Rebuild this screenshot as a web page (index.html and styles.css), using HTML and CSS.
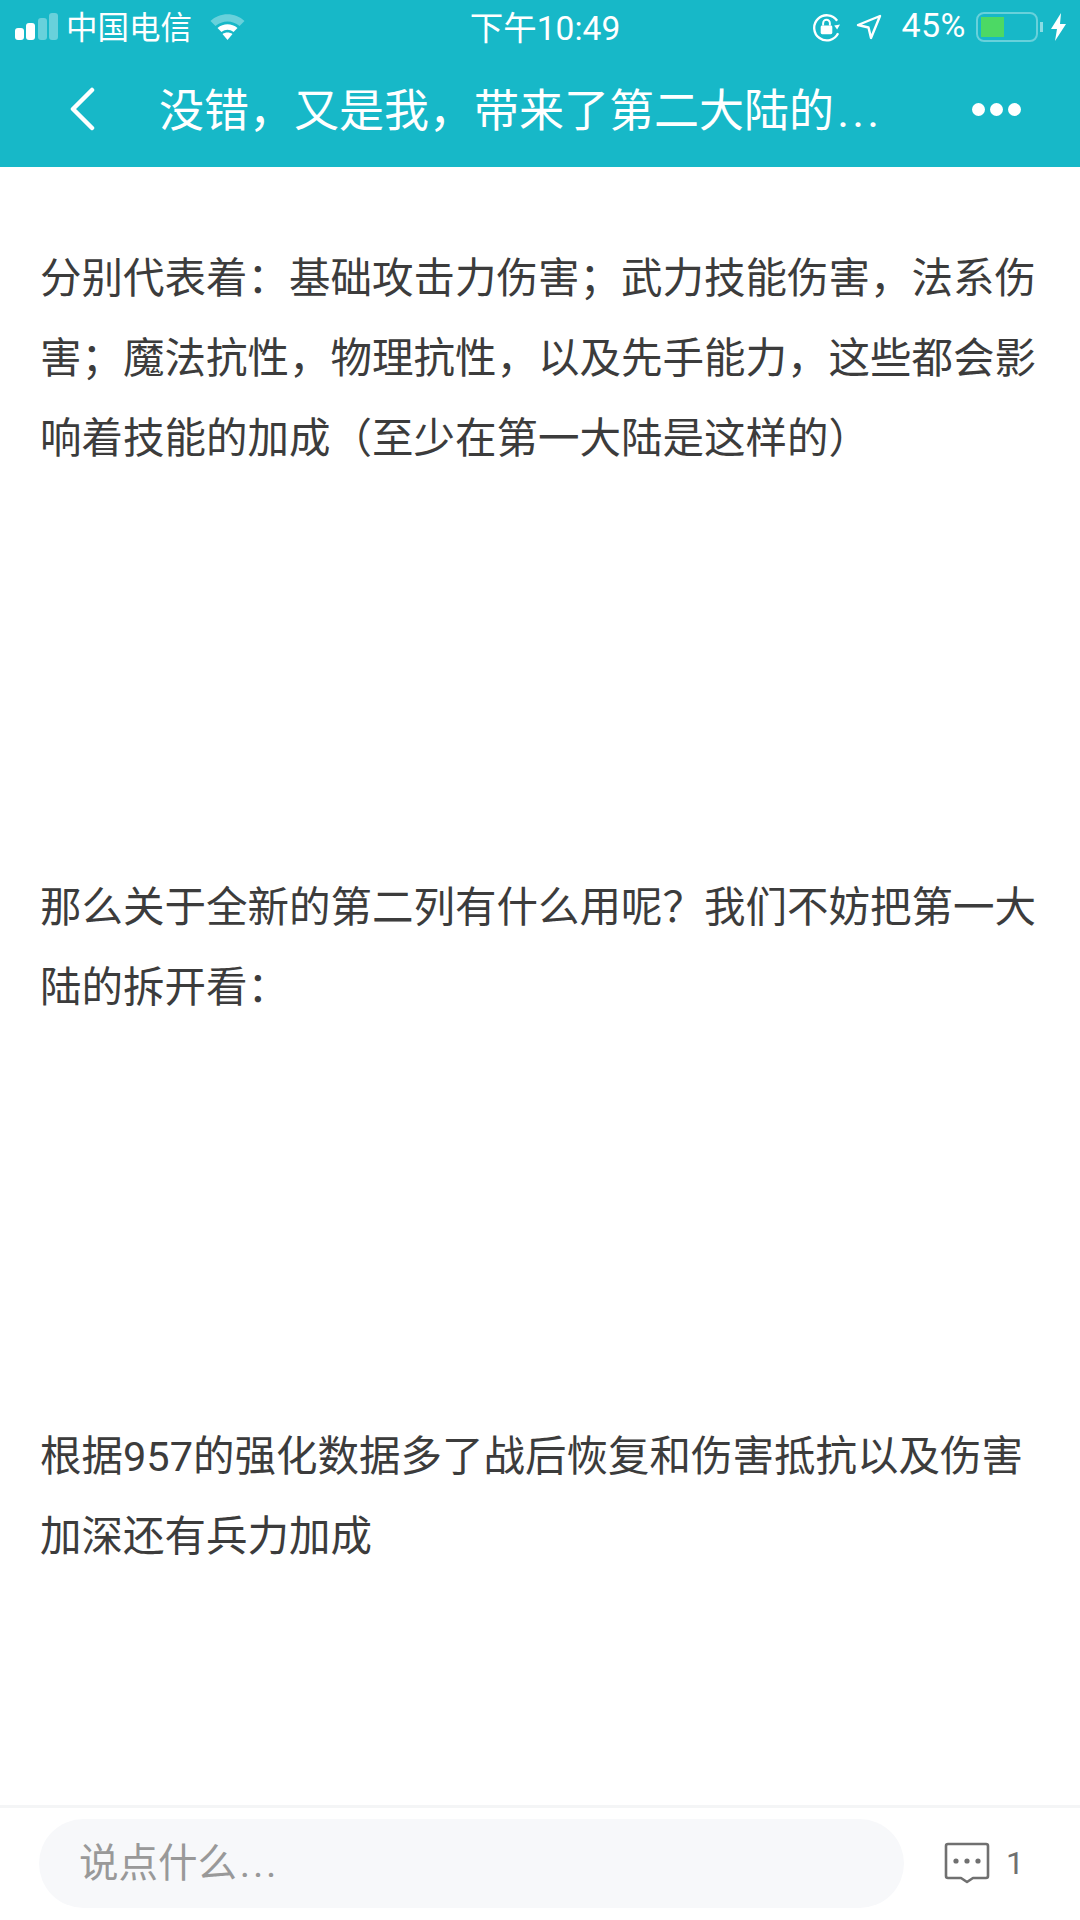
FILE: index.html
```html
<!DOCTYPE html>
<html lang="zh-CN">
<head>
  <meta charset="UTF-8">
  <title>没错&#xFF0C;又是我&#xFF0C;带来了第二大陆的...</title>
  <link rel="stylesheet" href="styles.css">
</head>
<body>
  <header class="top">
    <div class="status">
      <div class="status-left">
        <svg class="signal" width="44" height="28" viewBox="0 0 44 28">
          <rect x="0" y="15" width="9" height="12" rx="3" fill="#fff"/>
          <rect x="11" y="10" width="9" height="17" rx="3" fill="#fff"/>
          <rect x="23" y="5" width="9" height="22" rx="3" fill="#fff" opacity=".35"/>
          <rect x="34" y="0" width="9" height="27" rx="3" fill="#fff" opacity=".35"/>
        </svg>
        <span class="carrier">中国电信</span>
        <svg class="wifi" width="37" height="28" viewBox="0 0 36 28">
          <path d="M1 8C10-1 26-1 35 8L30 13C23 7 13 7 6 13Z" fill="#fff" opacity=".35"/>
          <path d="M8 15C14 10 22 10 28 15L24 19C20 16 16 16 12 19Z" fill="#fff"/>
          <path d="M13 21C16 19 20 19 23 21L18 27Z" fill="#fff"/>
        </svg>
      </div>
      <div class="status-time">下午10:49</div>
      <div class="status-right">
        <svg width="29" height="29" viewBox="0 0 30 30" fill="none">
          <path d="M27 21A13 13 0 1 1 26 8" stroke="#fff" stroke-width="2.4"/>
          <path d="M29 11L23 12L26 16Z" fill="#fff" transform="translate(0 1)"/>
          <rect x="9" y="13" width="12" height="9" rx="1.5" fill="#fff"/>
          <path d="M11.500 13V10.500A3.500 3.500 0 0 1 18.500 10.500V13" stroke="#fff" stroke-width="2"/>
        </svg>
        <svg class="loc" width="26" height="26" viewBox="0 0 26 26" fill="none">
          <path d="M2 11L24 2L15 24L12.500 13.500Z" stroke="#fff" stroke-width="2.400" stroke-linejoin="round"/>
        </svg>
        <span class="percent">45%</span>
        <div class="battery"><div class="battery-fill"></div></div>
        <div class="battery-cap"></div>
        <svg class="bolt" width="16" height="28" viewBox="0 0 16 28">
          <path d="M10 0L0 16H6L4 28L15 11H9Z" fill="#fff"/>
        </svg>
      </div>
    </div>
    <nav class="nav">
      <svg class="back" width="28" height="44" viewBox="0 0 28 44" fill="none">
        <path d="M24 3L5 22L24 41" stroke="#fff" stroke-width="4.500" stroke-linecap="round" stroke-linejoin="round"/>
      </svg>
      <h1 class="title">没错&#xFF0C;又是我&#xFF0C;带来了第二大陆的<span class="dots">...</span></h1>
      <div class="more"><i></i><i></i><i></i></div>
    </nav>
  </header>

  <main class="article">
    <p>分别代表着&#xFF1A;基础攻击力伤害&#xFF1B;武力技能伤害&#xFF0C;法系伤害&#xFF1B;魔法抗性&#xFF0C;物理抗性&#xFF0C;以及先手能力&#xFF0C;这些都会影响着技能的加成&#xFF08;至少在第一大陆是这样的&#xFF09;</p>
    <p>那么关于全新的第二列有什么用呢&#xFF1F;我们不妨把第一大陆的拆开看&#xFF1A;</p>
    <p>根据957的强化数据多了战后恢复和伤害抵抗以及伤害加深还有兵力加成</p>
  </main>

  <footer class="bar">
    <div class="input">说点什么<span class="dots">...</span></div>
    <div class="comments">
      <svg width="46" height="42" viewBox="0 0 46 42" fill="none">
        <path d="M4 2H42A2 2 0 0 1 44 4V34A2 2 0 0 1 42 36H29L23 40L17 36H4A2 2 0 0 1 2 34V4A2 2 0 0 1 4 2Z" stroke="#707070" stroke-width="2.600" stroke-linejoin="round"/>
        <circle cx="12" cy="19" r="2.600" fill="#707070"/>
        <circle cx="23" cy="19" r="2.600" fill="#707070"/>
        <circle cx="34" cy="19" r="2.600" fill="#707070"/>
      </svg>
      <span class="count">1</span>
    </div>
  </footer>
</body>
</html>
```

FILE: styles.css
```css
* {
  margin: 0;
  padding: 0;
  box-sizing: border-box;
}

body {
  width: 1080px;
  height: 1920px;
  display: flex;
  flex-direction: column;
  overflow: hidden;
  background: #fff;
  font-family: "Roboto", "Noto Sans CJK SC", sans-serif;
  color: #3c3c3c;
}

.top {
  height: 167px;
  background: #17b8c8;
  color: #fff;
}

.status {
  height: 54px;
  padding: 0 13px 0 15px;
  display: grid;
  grid-template-columns: 1fr auto 1fr;
  align-items: center;
  font-size: 31.500px;
}

.status-left,
.status-right {
  display: flex;
  align-items: center;
}

.status-right {
  justify-content: flex-end;
}

.carrier,
.status-time,
.percent {
  padding-bottom: 4px;
}

.status-time {
  margin-left: 8px;
  font-size: 33.500px;
}

.signal {
  margin-right: 7px;
}

.wifi {
  margin-left: 17px;
}

.loc {
  margin-left: 15px;
}

.percent {
  margin-left: 19px;
  margin-right: 10px;
  font-size: 34px;
  letter-spacing: .5px;
}

.battery {
  width: 62px;
  height: 30px;
  padding: 3px;
  border: 2px solid rgba(255, 255, 255, .35);
  border-radius: 8px;
}

.battery-fill {
  width: 45%;
  height: 100%;
  background: #4cd964;
}

.battery-cap {
  width: 3px;
  height: 10px;
  margin-left: 2px;
  background: rgba(255, 255, 255, .5);
}

.bolt {
  margin-left: 8px;
}

.nav {
  height: 113px;
  padding: 0 28px 3px 68px;
  display: flex;
  align-items: center;
}

.back {
  flex: none;
}

.title {
  flex: 1;
  margin-left: 63px;
  padding-bottom: 4px;
  font-size: 45px;
  font-weight: 400;
  white-space: nowrap;
}

.dots {
  margin-left: .07em;
  letter-spacing: .07em;
}

.more {
  display: flex;
  gap: 5px;
  margin-right: 31px;
}

.more i {
  width: 13px;
  height: 13px;
  border-radius: 50%;
  background: #fff;
}

.article {
  flex: 1;
  padding: 72px 40px 0;
  font-size: 41.500px;
  line-height: 80px;
}

.article p + p {
  margin-top: 389px;
}

.bar {
  height: 115px;
  padding: 11px 0 13px 39px;
  display: flex;
  align-items: center;
  border-top: 3px solid #f4f5f6;
}

.input {
  width: 865px;
  height: 89px;
  padding-left: 40px;
  line-height: 89px;
  border-radius: 45px;
  background: #f7f8fa;
  font-size: 39.500px;
  color: #999;
}

.comments {
  display: flex;
  align-items: center;
  margin-left: 40px;
  color: #707070;
}

.count {
  margin-left: 16px;
  font-size: 32px;
}
```
